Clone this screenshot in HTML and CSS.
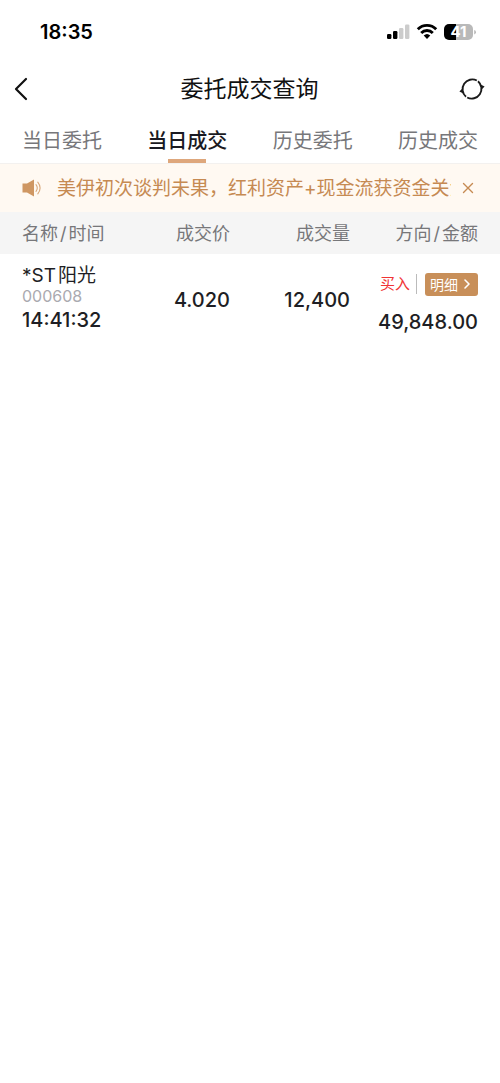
FILE: index.html
```
<!DOCTYPE html>
<html lang="zh-CN">
<head>
<meta charset="utf-8">
<meta name="viewport" content="width=device-width, initial-scale=1">
<title>委托成交查询</title>
<link rel="stylesheet" href="styles.css">
</head>
<body>
<div class="status">
  <time class="clock">18:35</time>
  <svg class="status-icons" width="90" height="20" viewBox="0 0 90 20" aria-hidden="true">
    <rect x="0" y="12" width="4.4" height="5" rx="1.2"/>
    <rect x="6" y="9" width="4.4" height="8" rx="1.2"/>
    <rect x="12" y="6" width="4.4" height="11" rx="1.2" fill="#ccc"/>
    <rect x="18" y="2.5" width="4.4" height="14.5" rx="1.2" fill="#ccc"/>
    <g fill="none" stroke="#000" stroke-width="2.9">
      <path d="M30.8 7.2a13 13 0 0 1 18.4 0"/>
      <path d="M34.2 10.9a8.2 8.2 0 0 1 11.6 0"/>
    </g>
    <path d="M36.7 13.6a4.8 4.8 0 0 1 6.6 0L40 17z"/>
    <path d="M62 2h7v16h-7a5 5 0 0 1-5-5V7a5 5 0 0 1 5-5z"/>
    <path d="M69 2h12a5 5 0 0 1 5 5v6a5 5 0 0 1-5 5H69z" fill="#b9b9b9"/>
    <path d="M87.2 8v4.4q1.8-.6 1.8-2.2t-1.8-2.2z" fill="#b9b9b9"/>
    <text class="battery" x="71.5" y="15.4" text-anchor="middle">41</text>
  </svg>
</div>
<header class="nav">
  <button class="icon-button" aria-label="返回">
    <svg width="14" height="24" viewBox="0 0 14 24"><path d="M12 2 2 12l10 10" fill="none" stroke="#111" stroke-width="2.2" stroke-linecap="round" stroke-linejoin="round"/></svg>
  </button>
  <h1 class="title">委托成交查询</h1>
  <button class="icon-button" aria-label="刷新">
    <svg width="26" height="24" viewBox="0 0 26 24"><g fill="none" stroke="#1a1a1a" stroke-width="1.9"><path d="M7 19.7A9.8 9.8 0 0 1 17.8 3.5"/><path d="M19 4.3A9.8 9.8 0 0 1 8.2 20.5"/></g><path d="m21.6 7.4 4 2-3 3.2zM4.4 16.6l-4-2 3-3.2z" fill="#1a1a1a"/></svg>
  </button>
</header>
<nav class="tabs">
  <a class="tab" href="#">当日委托</a>
  <a class="tab active" href="#" aria-current="page">当日成交</a>
  <a class="tab" href="#">历史委托</a>
  <a class="tab" href="#">历史成交</a>
</nav>
<div class="notice">
  <svg class="speaker" width="20" height="18" viewBox="0 0 20 18" aria-hidden="true"><path d="M.5 4.5H5L12 .6v16.8L5 13.5H.5z" fill="#cf9763"/><g fill="none" stroke="#d9a97d" stroke-width="1.1" stroke-linecap="round"><path d="M14 5.7q2.6 3.3 0 6.6"/><path d="M15.8 3.2q4.6 5.8 0 11.6"/></g></svg>
  <p class="notice-text">美伊初次谈判未果，红利资产+现金流获资金关注</p>
  <button class="icon-button close" aria-label="关闭">
    <svg width="12" height="12" viewBox="0 0 12 12"><path d="m1.5 1.5 9 9m0-9-9 9" stroke="#c68a52" stroke-width="1.4" stroke-linecap="round"/></svg>
  </button>
</div>
<table class="trades">
  <thead>
    <tr><th>名称<span class="slash">/</span>时间</th><th>成交价</th><th>成交量</th><th>方向<span class="slash">/</span>金额</th></tr>
  </thead>
  <tbody>
    <tr>
      <td>
        <div class="name"><span class="prefix">*ST</span>阳光</div>
        <div class="code">000608</div>
        <div class="time">14:41:32</div>
      </td>
      <td>4.020</td>
      <td>12,400</td>
      <td>
        <div class="actions">
          <span class="buy">买入</span>
          <button class="detail">明细<svg width="8" height="12" viewBox="0 0 8 12" aria-hidden="true"><path d="m2 2 4 4-4 4" fill="none" stroke="#fff" stroke-width="1.6" stroke-linecap="round" stroke-linejoin="round"/></svg></button>
        </div>
        <div class="amount">49,848.00</div>
      </td>
    </tr>
  </tbody>
</table>
</body>
</html>
```
FILE: styles.css
```
* {
  box-sizing: border-box;
}

body {
  margin: 0;
  background: #fff;
  color: #1e1e24;
  font-family: Inter, "Noto Sans CJK SC", sans-serif;
  font-size: 20px;
}

button {
  border: 0;
  font-family: inherit;
  cursor: pointer;
}

.status {
  display: flex;
  align-items: center;
  justify-content: space-between;
  height: 64px;
  padding: 0 23px 0 40px;
}

.clock {
  color: #000;
  font-weight: 600;
}

.battery {
  fill: #fff;
  font-size: 15px;
  font-weight: 700;
}

.nav {
  display: flex;
  align-items: center;
  justify-content: space-between;
  height: 50px;
  padding: 0 15px 0 14px;
}

.icon-button {
  display: flex;
  padding: 0;
  background: none;
}

.nav .icon-button {
  width: 26px;
}

.title {
  margin: 0;
  color: #111;
  font-size: 23px;
  font-weight: 400;
  line-height: 32px;
}

.tabs {
  display: flex;
  justify-content: space-between;
  height: 50px;
  padding: 0 22px;
  border-bottom: 1px solid #f3f1ef;
}

.tab {
  display: flex;
  flex-direction: column;
  align-items: center;
  justify-content: space-between;
  padding-top: 11px;
  color: #77777a;
  line-height: 32px;
  text-decoration: none;
}

.tab.active {
  color: #1a1a22;
  font-weight: 500;
}

.tab.active::after {
  content: "";
  width: 38px;
  height: 4px;
  background: #dea77c;
}

.notice {
  display: flex;
  align-items: center;
  height: 48px;
  padding: 0 26px 0 22px;
  background: #fff9f2;
}

.speaker {
  flex: none;
}

.notice-text {
  flex: 1;
  min-width: 0;
  margin: 0 11px 0 15px;
  padding-top: 2px;
  overflow: hidden;
  color: #c68a52;
  font-size: 19px;
  line-height: 28px;
  white-space: nowrap;
}

.trades {
  width: 100%;
  border-collapse: collapse;
  table-layout: fixed;
}

.trades th {
  height: 42px;
  padding: 2px 0 0;
  background: #f5f5f5;
  color: #77777a;
  font-size: 18px;
  font-weight: 400;
  line-height: 28px;
  text-align: right;
}

.slash {
  margin: 0 2px;
}

.trades th:first-child,
.trades td:first-child {
  width: 26%;
  padding-left: 22px;
  text-align: left;
}

.trades th:nth-child(2) {
  width: 20%;
}

.trades th:nth-child(3) {
  width: 24%;
}

.trades th:last-child,
.trades td:last-child {
  padding-right: 22px;
}

.trades td {
  padding: 10px 0 8px;
  font-weight: 500;
  text-align: right;
}

.name {
  font-size: 19px;
  font-weight: 400;
  line-height: 24px;
}

.prefix {
  margin-right: 2px;
}

.code {
  color: #aaaab0;
  font-size: 16px;
  font-weight: 400;
  line-height: 16px;
}

.time {
  line-height: 32px;
}

.trades td:last-child {
  padding-top: 18px;
}

.actions {
  display: flex;
  align-items: center;
  justify-content: flex-end;
  margin-bottom: 12px;
}

.buy {
  padding-right: 6px;
  border-right: 1px solid #bbb;
  color: #f03434;
  font-size: 15px;
  font-weight: 400;
  line-height: 20px;
}

.detail {
  display: flex;
  align-items: center;
  gap: 5px;
  margin-left: 8px;
  padding: 0 7px 0 5px;
  border-radius: 3px;
  background: #c88f59;
  color: #fff;
  font-size: 14px;
  line-height: 23px;
}

.amount {
  line-height: 28px;
}
```
